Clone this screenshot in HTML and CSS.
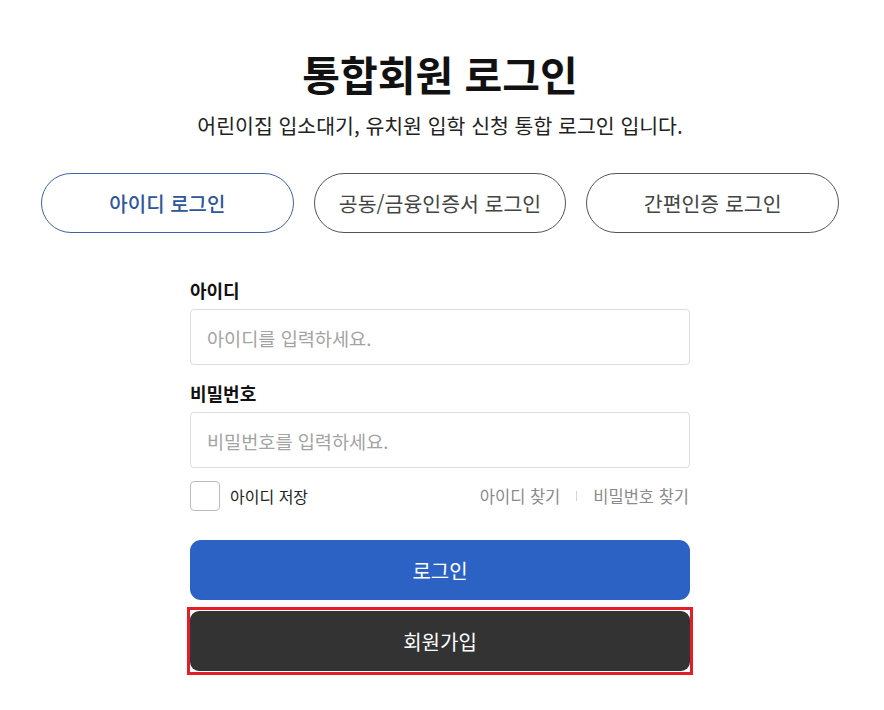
FILE: index.html
```html
<!DOCTYPE html>
<html lang="ko">
<head>
<meta charset="utf-8">
<title>통합회원 로그인</title>
<link rel="stylesheet" href="styles.css">
</head>
<body>
<main class="page">
  <h1 class="title">통합회원 로그인</h1>
  <p class="subtitle">어린이집 입소대기, 유치원 입학 신청 통합 로그인 입니다.</p>

  <nav class="tabs">
    <button class="tab tab-active" type="button">아이디 로그인</button>
    <button class="tab" type="button">공동/금융인증서 로그인</button>
    <button class="tab" type="button">간편인증 로그인</button>
  </nav>

  <form class="form">
    <label class="field-label" for="uid">아이디</label>
    <input class="field-input" id="uid" type="text" placeholder="아이디를 입력하세요.">

    <label class="field-label field-label-2" for="upw">비밀번호</label>
    <input class="field-input" id="upw" type="password" placeholder="비밀번호를 입력하세요.">

    <div class="options">
      <label class="save">
        <input class="check" type="checkbox">
        <span>아이디 저장</span>
      </label>
      <div class="links">
        <a class="link" href="#">아이디 찾기</a>
        <span class="sep"></span>
        <a class="link" href="#">비밀번호 찾기</a>
      </div>
    </div>

    <button class="btn btn-login" type="button">로그인</button>
    <div class="highlight">
      <button class="btn btn-join" type="button">회원가입</button>
    </div>
  </form>
</main>
</body>
</html>
```

FILE: styles.css
```css
* {
  box-sizing: border-box;
}

html, body {
  margin: 0;
  padding: 0;
  background: #fff;
}

body {
  font-family: "Noto Sans CJK KR", "Noto Sans", sans-serif;
  color: #222;
}

.page {
  width: 880px;
  padding-top: 49px;
  display: flex;
  flex-direction: column;
  align-items: center;
}

.title {
  margin: 0;
  font-size: 41px;
  line-height: 48px;
  font-weight: 700;
  color: #111;
}

.subtitle {
  margin: 14px 0 0;
  font-size: 20.5px;
  line-height: 28px;
  color: #222;
}

.tabs {
  margin-top: 34px;
  width: 798px;
  display: grid;
  grid-template-columns: repeat(3, 1fr);
  gap: 20px;
}

.tab {
  height: 60px;
  border: 1px solid #555;
  border-radius: 30px;
  background: #fff;
  font-family: inherit;
  font-size: 20.5px;
  color: #444;
  padding: 0;
  cursor: pointer;
}

.tab-active {
  border-color: #3d63a6;
  color: #2f569b;
  font-weight: 500;
  font-size: 20px;
}

.form {
  margin-top: 45px;
  width: 500px;
  display: flex;
  flex-direction: column;
}

.field-label {
  font-size: 18px;
  line-height: 24px;
  font-weight: 700;
  color: #111;
  margin-bottom: 7px;
}

.field-label-2 {
  margin-top: 16px;
}

.field-input {
  height: 56px;
  border: 1px solid #ddd;
  border-radius: 4px;
  padding: 0 16px;
  font-family: inherit;
  font-size: 18.6px;
  color: #222;
  outline: none;
}

.field-input::placeholder {
  color: #a3a3a3;
}

.options {
  margin-top: 13px;
  height: 30px;
  display: flex;
  align-items: center;
  justify-content: space-between;
}

.save {
  display: flex;
  align-items: center;
  gap: 10px;
  font-size: 16px;
  color: #222;
}

.check {
  appearance: none;
  -webkit-appearance: none;
  margin: 0;
  width: 30px;
  height: 30px;
  border: 1px solid #bbb;
  border-radius: 4px;
  background: #fff;
}

.links {
  display: flex;
  align-items: center;
  gap: 16px;
  padding-right: 1px;
}

.link {
  font-size: 16.5px;
  color: #8a8a8a;
  text-decoration: none;
}

.sep {
  width: 1px;
  height: 10px;
  background: #d4d4d4;
}

.btn {
  height: 60px;
  width: 100%;
  border: 0;
  font-family: inherit;
  font-size: 20px;
  color: #fff;
  cursor: pointer;
}

.btn-login {
  margin-top: 29px;
  background: #2d62c5;
  border-radius: 11px;
}

.highlight {
  margin: 7px -3px 0;
  border: 3px solid #e31e26;
  padding: 1px 0;
}

.btn-join {
  background: #333;
  border-radius: 9px;
}
```
